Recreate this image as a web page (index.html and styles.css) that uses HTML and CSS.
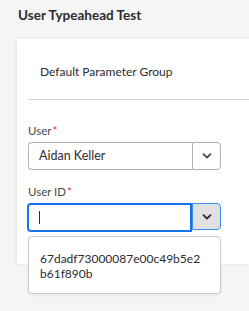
FILE: index.html
```html
<!DOCTYPE html>
<html>
<head>
<meta charset="utf-8">
<link rel="stylesheet" href="styles.css">
</head>
<body>
<h1 class="title">User Typeahead Test</h1>
<div class="card">
  <div class="group-title">Default Parameter Group</div>
  <div class="divider"></div>
  <div class="fields">
    <div class="field">
      <label class="label">User<span class="req">*</span></label>
      <div class="combo">
        <div class="combo-input">Aidan Keller</div>
        <div class="combo-btn">
          <svg width="10" height="6" viewBox="0 0 10 6"><path d="M1.5 1.2 L5 4.5 L8.5 1.2" fill="none" stroke="#4b4b4b" stroke-width="1.8" stroke-linecap="round" stroke-linejoin="round"/></svg>
        </div>
      </div>
    </div>
    <div class="field field-second">
      <label class="label">User ID<span class="req">*</span></label>
      <div class="combo combo-focus">
        <div class="combo-input"><span class="caret"></span></div>
        <div class="combo-btn">
          <svg width="10" height="6" viewBox="0 0 10 6"><path d="M1.5 1.2 L5 4.5 L8.5 1.2" fill="none" stroke="#2c2c2c" stroke-width="1.8" stroke-linecap="round" stroke-linejoin="round"/></svg>
        </div>
        <div class="menu">
          <div class="menu-item">67dadf73000087e00c49b5e2 b61f890b</div>
        </div>
      </div>
    </div>
  </div>
</div>
</body>
</html>
```

FILE: styles.css
```css
html, body {
  margin: 0;
  padding: 0;
}
body {
  background: #f5f5f5;
  font-family: Lato, "Noto Sans", sans-serif;
  color: #2c2c2c;
  width: 249px;
  height: 311px;
  overflow: hidden;
}
.title {
  margin: 0;
  padding: 7px 0 0 18px;
  height: 32px;
  box-sizing: border-box;
  font-size: 13.5px;
  line-height: 17px;
  font-weight: 700;
  color: #2c2c2c;
}
.card {
  margin-left: 17px;
  background: #fff;
  box-shadow: -1px 0 4px rgba(0,0,0,0.08);
  padding-bottom: 32px;
  margin-top: 7px;
}
.group-title {
  padding: 25px 0 0 23px;
  height: 60px;
  box-sizing: border-box;
  font-size: 12px;
  line-height: 16px;
  color: #2c2c2c;
}
.divider {
  margin-left: 11px;
  height: 1px;
  background: #d6d6d6;
}
.fields {
  padding: 24px 0 0 11px;
}
.field {
  display: flex;
  flex-direction: column;
  width: 193px;
}
.field-second {
  margin-top: 15px;
}
.label {
  font-size: 11.5px;
  line-height: 14px;
  color: #4b4b4b;
  margin-bottom: 4px;
}
.req {
  color: #d7373f;
  margin-left: 1px;
}
.combo {
  position: relative;
  display: flex;
  height: 28px;
}
.combo-input {
  flex: 1;
  border: 1px solid #b3b3b3;
  border-right: none;
  border-radius: 4px 0 0 4px;
  padding-left: 10px;
  font-size: 12.5px;
  line-height: 26px;
  color: #2c2c2c;
  display: flex;
  align-items: center;
}
.combo-btn {
  width: 27px;
  border: 1px solid #b3b3b3;
  border-radius: 0 4px 4px 0;
  display: flex;
  align-items: center;
  justify-content: center;
  background: #fff;
}
.combo-focus {
  height: 29px;
  margin-left: -1px;
  width: 194px;
}
.combo-focus .combo-input {
  border: 2px solid #1473e6;
  border-radius: 4px 0 0 4px;
  padding-left: 10px;
}
.combo-focus .combo-btn {
  background: #e1e1e1;
  border-color: #378ef0;
  height: 25px;
}
.caret {
  width: 1px;
  height: 13px;
  background: #2c2c2c;
}
.menu {
  position: absolute;
  left: 1px;
  top: 33px;
  width: 193px;
  box-sizing: border-box;
  background: #fff;
  border: 1px solid #cacaca;
  border-radius: 4px;
  padding: 14px 12px 12px 11px;
  box-shadow: 0 1px 3px rgba(0,0,0,0.08);
}
.menu-item {
  font-size: 12px;
  line-height: 15px;
  color: #2c2c2c;
  overflow-wrap: anywhere;
}
```
